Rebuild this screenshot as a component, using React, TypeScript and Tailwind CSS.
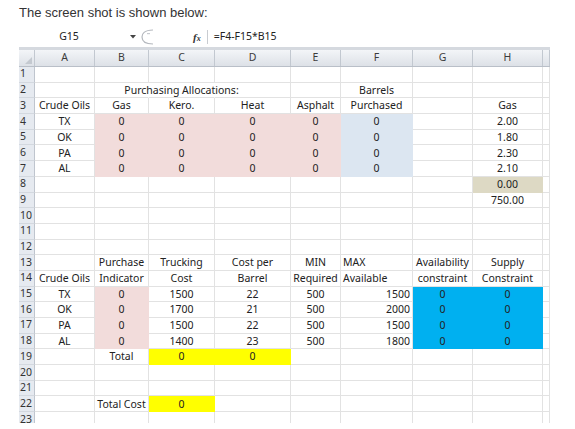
import React from 'react';

type Fill = 'none' | 'pink' | 'lblue' | 'tan' | 'blue' | 'yellow';
type Align = 'l' | 'c' | 'r';

interface Cell {
  t?: string;
  a?: Align;
  f?: Fill;
  nr?: boolean; // hide right gridline (text overflows)
}

const colLetters = ['A', 'B', 'C', 'D', 'E', 'F', 'G', 'H', ''];
const colWidths = ['w-[60px]', 'w-[54px]', 'w-[66px]', 'w-[76px]', 'w-[50px]', 'w-[72px]', 'w-[60px]', 'w-[70px]', 'w-[7px]'];

const fillClass: Record<Fill, string> = {
  none: 'border-b-[#e2e2e2] border-r-[#e2e2e2]',
  pink: 'bg-[#f2dcdb] border-b-[#f2dcdb] border-r-[#f2dcdb]',
  lblue: 'bg-[#dce6f1] border-b-[#dce6f1] border-r-[#dce6f1]',
  tan: 'bg-[#ddd9c4] border-b-[#ddd9c4] border-r-[#ddd9c4]',
  blue: 'bg-[#00b0f0] border-b-[#00b0f0] border-r-[#00b0f0]',
  yellow: 'bg-[#ffff00] border-b-[#ffff00] border-r-[#ffff00]',
};

const alignClass: Record<Align, string> = {
  l: 'justify-start pl-[2px]',
  c: 'justify-center',
  r: 'justify-end pr-[2px]',
};

const c = (t: string, f: Fill = 'none', a: Align = 'c'): Cell => ({ t, f, a });

// sheet contents, keyed by row number, columns A..H
const data: Record<number, (Cell | null)[]> = {
  2: [null, { nr: true }, { t: 'Purchasing Allocations:', nr: true }, null, null, c('Barrels')],
  3: [c('Crude Oils'), c('Gas'), c('Kero.'), c('Heat'), c('Asphalt'), c('Purchased'), null, c('Gas')],
  4: [c('TX'), c('0', 'pink'), c('0', 'pink'), c('0', 'pink'), c('0', 'pink'), c('0', 'lblue'), null, c('2.00')],
  5: [c('OK'), c('0', 'pink'), c('0', 'pink'), c('0', 'pink'), c('0', 'pink'), c('0', 'lblue'), null, c('1.80')],
  6: [c('PA'), c('0', 'pink'), c('0', 'pink'), c('0', 'pink'), c('0', 'pink'), c('0', 'lblue'), null, c('2.30')],
  7: [c('AL'), c('0', 'pink'), c('0', 'pink'), c('0', 'pink'), c('0', 'pink'), c('0', 'lblue'), null, c('2.10')],
  8: [null, null, null, null, null, null, null, c('0.00', 'tan')],
  9: [null, null, null, null, null, null, null, c('750.00')],
  13: [null, c('Purchase'), c('Trucking'), c('Cost per'), c('MIN'), c('MAX', 'none', 'l'), c('Availability'), c('Supply')],
  14: [c('Crude Oils'), c('Indicator'), c('Cost'), c('Barrel'), c('Required'), c('Available', 'none', 'l'), c('constraint'), c('Constraint')],
  15: [c('TX'), c('0', 'pink'), c('1500'), c('22'), c('500'), c('1500', 'none', 'r'), c('0', 'blue'), c('0', 'blue')],
  16: [c('OK'), c('0', 'pink'), c('1700'), c('21'), c('500'), c('2000', 'none', 'r'), c('0', 'blue'), c('0', 'blue')],
  17: [c('PA'), c('0', 'pink'), c('1500'), c('22'), c('500'), c('1500', 'none', 'r'), c('0', 'blue'), c('0', 'blue')],
  18: [c('AL'), c('0', 'pink'), c('1400'), c('23'), c('500'), c('1800', 'none', 'r'), c('0', 'blue'), c('0', 'blue')],
  19: [null, c('Total'), c('0', 'yellow'), c('0', 'yellow')],
  22: [null, c('Total Cost'), c('0', 'yellow')],
};

const rows = Array.from({ length: 23 }, (_, i) => i + 1);

const SheetCell: React.FC<{ cell: Cell | null; width: string }> = ({ cell, width }) => {
  const f = cell?.f ?? 'none';
  const a = cell?.a ?? 'c';
  return (
    <div
      className={`${width} h-full shrink-0 flex items-center border-r border-b whitespace-nowrap ${fillClass[f]} ${alignClass[a]} ${
        cell?.nr ? 'border-r-transparent' : ''
      }`}
    >
      {cell?.t && <span className="leading-none">{cell.t}</span>}
    </div>
  );
};

const FormulaBar: React.FC = () => (
  <div className="flex items-center h-[18px] pl-[19px] text-[10.5px] text-[#222]">
    <div className="w-[100px] text-center">G15</div>
    <svg className="ml-[11px]" width="6" height="4" viewBox="0 0 6 4">
      <path d="M0 0 L6 0 L3 3.5 Z" fill="#444" />
    </svg>
    <svg className="ml-[5px]" width="14" height="16" viewBox="0 0 14 16">
      <path d="M12 1 C 3 1, 1 5, 1 8 C 1 11, 3 15, 12 15" fill="none" stroke="#b4b8be" strokeWidth="1.2" />
      <rect x="6" y="4" width="3" height="1.2" fill="#c8cbd0" />
    </svg>
    <span className="ml-[38px] font-['Liberation_Serif',serif] italic font-bold text-[11px] text-[#333] leading-none">
      f<span className="text-[8px]">x</span>
    </span>
    <div className="ml-[6px] w-px h-[14px] bg-[#c9ccd1]" />
    <span className="ml-[6px]">=F4-F15*B15</span>
  </div>
);

export default function App() {
  return (
    <div className="w-[575px] h-[429px] bg-white overflow-hidden font-['Noto_Sans',sans-serif]">
      <div className="h-[28px] pt-[5px] pl-[19px] text-[13px] leading-[16px] text-[#333] font-['Liberation_Sans',Arial,sans-serif]">
        The screen shot is shown below:
      </div>
      <FormulaBar />
      <div className="ml-[19px] w-[531px] h-[3px] mt-px bg-[#d5d9df]" />
      <div className="ml-[19px] w-[531px] h-[373px] overflow-hidden text-[10.5px] text-[#222]">
        {/* column headers */}
        <div className="flex h-[17px] bg-gradient-to-b from-[#f3f5f8] to-[#dde1e7] border-b border-[#b9bfc8] text-[#3c3c3c]">
          <div className="w-[16px] h-full shrink-0 border-r border-[#c2c8d0] flex items-end justify-end p-[2px]">
            <svg width="7" height="7" viewBox="0 0 7 7">
              <path d="M7 0 L7 7 L0 7 Z" fill="#c4c9d0" />
            </svg>
          </div>
          {colLetters.map((l, i) => (
            <div
              key={i}
              className={`${colWidths[i]} h-full shrink-0 flex items-center justify-center border-r border-[#c2c8d0]`}
            >
              {l}
            </div>
          ))}
        </div>
        {rows.map((r) => {
          const cells = data[r] ?? [];
          return (
            <div key={r} className="flex h-[15.7px]">
              <div className="w-[16px] h-full shrink-0 bg-[#e6eaf0] border-r border-b border-r-[#bfc5ce] border-b-[#d3d8df] flex items-center pl-[1px] text-[#333]">
                {r}
              </div>
              {colWidths.map((w, i) => (
                <SheetCell key={i} width={w} cell={cells[i] ?? null} />
              ))}
            </div>
          );
        })}
      </div>
    </div>
  );
}
